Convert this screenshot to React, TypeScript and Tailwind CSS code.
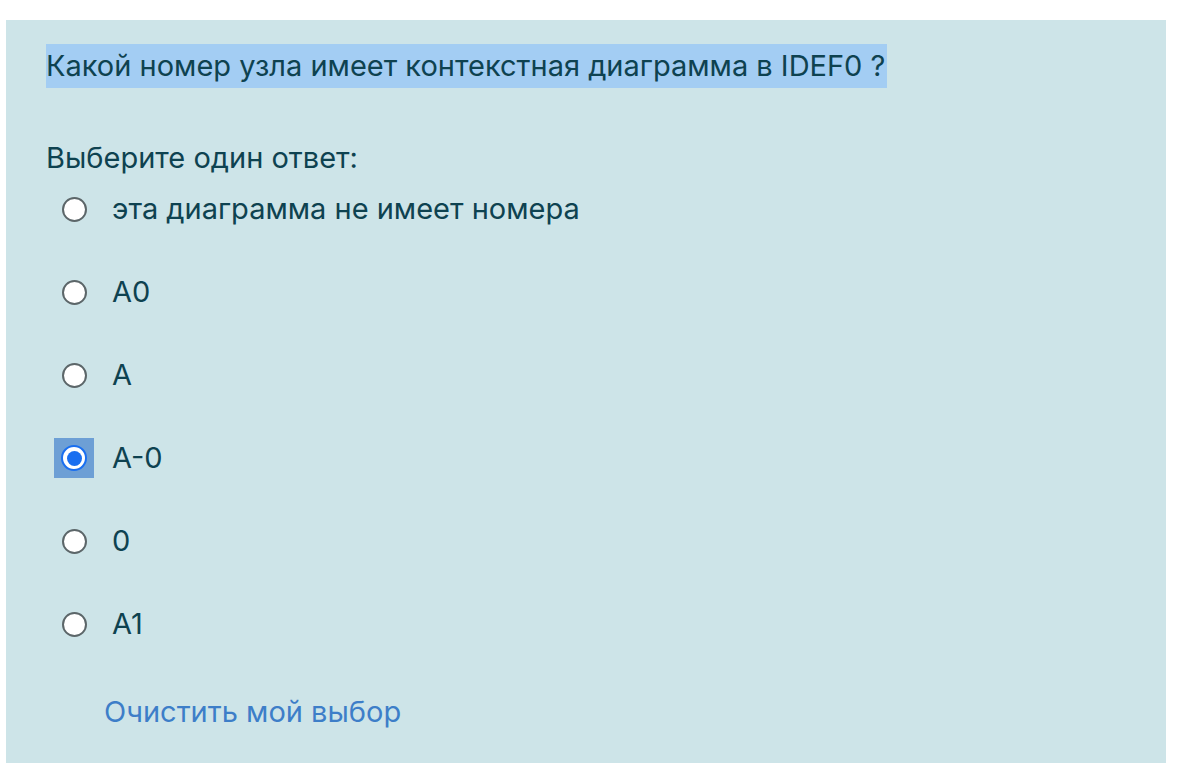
import React from "react";

const options = [
  "эта диаграмма не имеет номера",
  "A0",
  "A",
  "A-0",
  "0",
  "A1",
];

function Radio({ checked }: { checked: boolean }) {
  if (checked) {
    return (
      <div className="w-[40px] h-[40px] bg-[#6d9fd5] flex items-center justify-center">
        <div className="w-[26px] h-[26px] rounded-full bg-white border-2 border-[#1a6ff0] flex items-center justify-center">
          <div className="w-[15px] h-[15px] rounded-full bg-[#1a6ff0]" />
        </div>
      </div>
    );
  }
  return (
    <div className="w-[40px] h-[40px] flex items-center justify-center">
      <div className="w-[25px] h-[25px] rounded-full bg-white border-2 border-[#5c6669]" />
    </div>
  );
}

export default function App() {
  return (
    <div className="w-[1196px] h-[782px] bg-white pt-[20px] pl-[6px]" style={{ fontFamily: 'Inter, "Liberation Sans", Arial, sans-serif' }}>
      <div className="w-[1160px] h-[743px] bg-[#cde4e8] pt-[24px] pl-[40px] text-[#0e4250]">
        <div className="text-[29px] leading-[44px] inline-block bg-[#a3cdf3] pr-[2px]">Какой номер узла имеет контекстная диаграмма в IDEF0 ?</div>
        <div className="mt-[48px] text-[29px] leading-[44px]">Выберите один ответ:</div>
        <div className="flex flex-col gap-[43px] mt-[9px] ml-[8px]">
          {options.map((o, i) => (
            <div key={i} className="flex items-center h-[40px]">
              <Radio checked={o === "A-0"} />
              <span className="ml-[18px] text-[29px]">{o}</span>
            </div>
          ))}
        </div>
        <div className="mt-[46px] ml-[58px] text-[29px] text-[#3d7ec8]">Очистить мой выбор</div>
      </div>
    </div>
  );
}
